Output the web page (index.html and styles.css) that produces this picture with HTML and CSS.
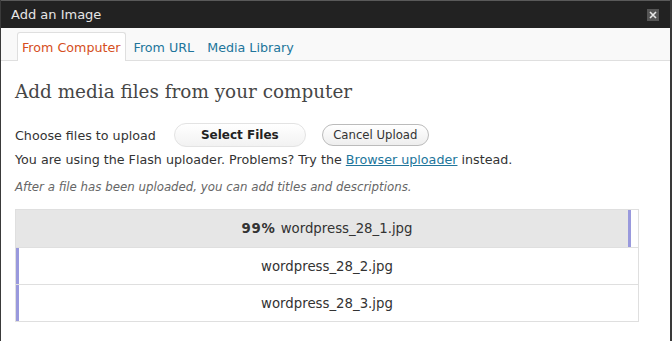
FILE: index.html
```html
<!DOCTYPE html>
<html lang="en">
<head>
    <meta charset="UTF-8">
    <title>Add an Image</title>
    <link rel="stylesheet" href="styles.css">
</head>
<body>
    <div class="dialog">
        <div class="titlebar">
            <span class="title">Add an Image</span>
            <button class="close-btn" title="Close">
                <svg width="8" height="8" viewBox="0 0 8 8"><path d="M1 1L7 7M7 1L1 7" stroke="#e8e8e8" stroke-width="1.6"/></svg>
            </button>
        </div>

        <ul class="tabs">
            <li class="tab active">From Computer</li>
            <li class="tab">From URL</li>
            <li class="tab">Media Library</li>
        </ul>

        <div class="content">
            <h3 class="heading">Add media files from your computer</h3>

            <div class="upload-row">
                <span>Choose files to upload</span>
                <button class="select-btn">Select Files</button>
                <button class="cancel-btn">Cancel Upload</button>
            </div>
            <p class="flash-note">You are using the Flash uploader. Problems? Try the <a href="#">Browser uploader</a> instead.</p>
            <p class="hint">After a file has been uploaded, you can add titles and descriptions.</p>

            <div class="queue">
                <div class="file-row">
                    <div class="progress" style="width: 98.8%"></div>
                    <span class="file-name"><strong class="percent">99%</strong> wordpress_28_1.jpg</span>
                </div>
                <div class="file-row">
                    <div class="progress" style="width: 0%"></div>
                    <span class="file-name">wordpress_28_2.jpg</span>
                </div>
                <div class="file-row">
                    <div class="progress" style="width: 0%"></div>
                    <span class="file-name">wordpress_28_3.jpg</span>
                </div>
            </div>
        </div>
    </div>
</body>
</html>
```

FILE: styles.css
```css
* {
    margin: 0;
    padding: 0;
    box-sizing: border-box;
}

body {
    font-family: "DejaVu Sans", Verdana, sans-serif;
    font-size: 12.7px;
    color: #333;
    background: #fff;
}

.dialog {
    height: 341px;
    border-left: 1px solid #3a3a3a;
    border-right: 2px solid #3a3a3a;
    background: #fff;
}

.titlebar {
    height: 28px;
    background: #222;
    border-top: 1px solid #5a5a5a;
    display: flex;
    align-items: center;
    justify-content: space-between;
    padding: 0 11px 0 10px;
}

.title {
    color: #e6e6e6;
    font-size: 13px;
}

.close-btn {
    width: 12px;
    height: 12px;
    background: #555;
    border: none;
    display: flex;
    align-items: center;
    justify-content: center;
    cursor: pointer;
}

.tabs {
    list-style: none;
    display: flex;
    align-items: flex-end;
    height: 33px;
    background: #f9f9f9;
    border-bottom: 1px solid #dfdfdf;
    padding-left: 16px;
}

.tab {
    height: 29px;
    line-height: 29px;
    padding: 0 4px;
    color: #21759b;
    font-size: 12.7px;
    border: 1px solid transparent;
    border-bottom: none;
    margin-bottom: -1px;
    margin-right: 3px;
}

.tab.active {
    color: #d54e21;
    background: #fff;
    border-color: #dfdfdf;
    border-radius: 3px 3px 0 0;
}

.content {
    padding: 0 14px;
}

.heading {
    font-family: "DejaVu Serif", Georgia, serif;
    font-weight: normal;
    font-size: 18.4px;
    color: #464646;
    margin: 20px 0 21px;
}

.upload-row {
    display: flex;
    align-items: center;
    height: 24px;
}

.select-btn {
    margin-left: 18px;
    width: 132px;
    height: 24px;
    border: 1px solid #e3e3e3;
    border-radius: 12px;
    background: linear-gradient(#fff, #f2f2f2);
    font-family: inherit;
    font-size: 12px;
    font-weight: bold;
    color: #222;
}

.cancel-btn {
    margin-left: 16px;
    width: 107px;
    height: 22px;
    border: 1px solid #bbb;
    border-radius: 11px;
    background: linear-gradient(#fff, #eee);
    font-family: inherit;
    font-size: 11.7px;
    color: #333;
}

.flash-note {
    margin-top: 5px;
    line-height: 16px;
}

.flash-note a {
    color: #21759b;
}

.hint {
    margin-top: 12px;
    font-style: italic;
    color: #666;
    font-size: 11.8px;
}

.queue {
    margin-top: 15px;
    width: 624px;
    border: 1px solid #dfdfdf;
}

.file-row {
    position: relative;
    height: 37px;
    border-top: 1px solid #dfdfdf;
    display: flex;
    align-items: center;
    justify-content: center;
    font-size: 13.3px;
}

.file-row:first-child {
    border-top: none;
}

.progress {
    position: absolute;
    left: 0;
    top: 0;
    bottom: 0;
    background: #e6e6e6;
    border-right: 3px solid #9999dd;
}

.file-name {
    position: relative;
    color: #333;
}

.percent {
    letter-spacing: 0.7px;
    margin-right: 1px;
}
```
